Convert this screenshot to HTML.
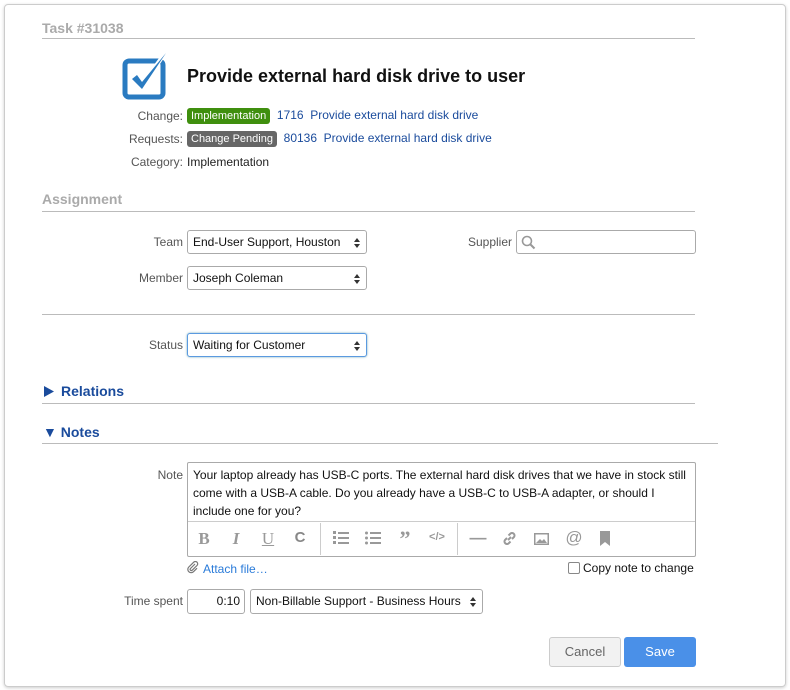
<!DOCTYPE html>
<html><head><style>
*{box-sizing:border-box;margin:0;padding:0}
body{width:790px;height:690px;background:#fff;font-family:"Liberation Sans",sans-serif;font-size:12px;color:#222;position:relative;overflow:hidden}
.frame{position:absolute;left:4px;top:4px;width:782px;height:683px;border:1px solid #ccc;border-radius:4px;box-shadow:0 1px 3px rgba(0,0,0,.2)}
.a{position:absolute;white-space:nowrap}
.hr{position:absolute;height:1px;background:#bbb}
.lbl{position:absolute;text-align:right;color:#555;white-space:nowrap}
.sel{position:absolute;border:1px solid #aaa;border-radius:3px;background:#fff;height:24px;line-height:22px;padding-left:5px;font-size:12px;color:#111}
.sel:after{content:"";position:absolute;right:6px;top:7px;border:3.5px solid transparent;border-bottom:4px solid #333;border-top:0}
.sel:before{content:"";position:absolute;right:6px;top:13px;border:3.5px solid transparent;border-top:4px solid #333;border-bottom:0}
.badge{display:inline-block;color:#fff;border-radius:3px;padding:1px 4px;font-size:11px;line-height:14px}
.lnk{color:#1a4b9c}
.h2{position:absolute;font-weight:bold;font-size:14px;color:#1a4b9c}
.tb{position:absolute;color:#999;font-size:17px;text-align:center;width:20px}
</style></head><body>
<div class="frame"></div>
<div class="a" style="left:42px;top:20px;font-weight:bold;font-size:14px;color:#aaa">Task #31038</div>
<div class="hr" style="left:42px;top:38px;width:653px"></div>
<svg class="a" style="left:122px;top:52px" width="46" height="48" viewBox="0 0 46 48"><rect x="3" y="9" width="38" height="36" rx="4" fill="none" stroke="#2a7bc1" stroke-width="5"/><path d="M8 27 L20 39 L46 0 L40 2 L20 29 L14 22 Z" fill="#fff"/><path d="M10 27 L20 37 L44 1 L20 30 L15 23 Z" fill="#2a7bc1"/></svg>
<div class="a" style="left:187px;top:66px;font-weight:bold;font-size:18px;color:#111">Provide external hard disk drive to user</div>
<div class="lbl" style="right:607px;top:109px">Change:</div>
<div class="a" style="left:187px;top:108px"><span class="badge" style="background:#3f8f0e">Implementation</span>&nbsp; <span class="lnk">1716&nbsp; Provide external hard disk drive</span></div>
<div class="lbl" style="right:607px;top:132px">Requests:</div>
<div class="a" style="left:187px;top:131px"><span class="badge" style="background:#666">Change Pending</span>&nbsp; <span class="lnk">80136&nbsp; Provide external hard disk drive</span></div>
<div class="lbl" style="right:607px;top:155px">Category:</div>
<div class="a" style="left:187px;top:155px">Implementation</div>
<div class="a" style="left:42px;top:191px;font-weight:bold;font-size:14px;color:#aaa">Assignment</div>
<div class="hr" style="left:42px;top:211px;width:653px"></div>
<div class="lbl" style="right:607px;top:235px">Team</div>
<div class="sel" style="left:187px;top:230px;width:180px">End-User Support, Houston</div>
<div class="lbl" style="right:278px;top:235px">Supplier</div>
<div class="a" style="left:516px;top:230px;width:180px;height:24px;border:1px solid #aaa;border-radius:3px"><svg style="position:absolute;left:4px;top:4px" width="15" height="15" viewBox="0 0 15 15"><circle cx="6" cy="6" r="4.5" fill="none" stroke="#999" stroke-width="1.6"/><path d="M9.5 9.5 L13.5 13.5" stroke="#999" stroke-width="2"/></svg></div>
<div class="lbl" style="right:607px;top:271px">Member</div>
<div class="sel" style="left:187px;top:266px;width:180px">Joseph Coleman</div>
<div class="hr" style="left:42px;top:314px;width:653px"></div>
<div class="lbl" style="right:607px;top:338px">Status</div>
<div class="sel" style="left:187px;top:333px;width:180px;border-color:#5b9ae0;box-shadow:0 0 2px #7ab">Waiting for Customer</div>
<svg class="a" style="left:44px;top:386px" width="10" height="11"><path d="M0 0 L10 5.5 L0 11Z" fill="#1a4b9c"/></svg>
<div class="h2" style="left:61px;top:383px">Relations</div>
<div class="hr" style="left:42px;top:403px;width:653px"></div>
<div class="h2" style="left:43px;top:424px">▼ Notes</div>
<div class="hr" style="left:42px;top:443px;width:676px"></div>
<div class="lbl" style="right:607px;top:468px">Note</div>
<div class="a" style="left:187px;top:462px;width:509px;height:95px;border:1px solid #aaa;border-radius:2px"></div>
<div class="a" style="left:193px;top:466px;width:500px;white-space:normal;line-height:18px;font-size:12px;color:#111">Your laptop already has USB-C ports. The external hard disk drives that we have in stock still come with a USB-A cable. Do you already have a USB-C to USB-A adapter, or should I include one for you?</div>
<div class="hr" style="left:188px;top:521px;width:507px;background:#ccc"></div>
<div class="a" style="left:320px;top:523px;width:1px;height:32px;background:#ccc"></div>
<div class="a" style="left:457px;top:523px;width:1px;height:32px;background:#ccc"></div>
<div class="tb" style="left:194px;top:529px;font-family:'Liberation Serif';font-weight:bold">B</div>
<div class="tb" style="left:226px;top:529px;font-family:'Liberation Serif';font-style:italic;font-weight:bold">I</div>
<div class="tb" style="left:258px;top:529px;font-family:'Liberation Serif';text-decoration:underline">U</div>
<div class="tb" style="left:290px;top:529px;font-weight:bold;font-size:15px;color:#888">C</div>
<svg class="a" style="left:333px;top:531px" width="16" height="14"><g fill="#999"><rect x="5" y="1" width="11" height="2"/><rect x="5" y="6" width="11" height="2"/><rect x="5" y="11" width="11" height="2"/><rect x="0" y="0" width="3" height="3"/><rect x="0" y="5" width="3" height="3"/><rect x="0" y="10" width="3" height="3"/></g></svg>
<svg class="a" style="left:365px;top:531px" width="16" height="14"><g fill="#999"><rect x="5" y="1" width="11" height="2"/><rect x="5" y="6" width="11" height="2"/><rect x="5" y="11" width="11" height="2"/><circle cx="1.5" cy="2" r="1.5"/><circle cx="1.5" cy="7" r="1.5"/><circle cx="1.5" cy="12" r="1.5"/></g></svg>
<div class="tb" style="left:395px;top:526px;font-weight:bold;font-size:22px;font-family:'Liberation Serif'">”</div>
<div class="tb" style="left:427px;top:531px;font-size:11px;font-weight:bold">&lt;/&gt;</div>
<div class="tb" style="left:468px;top:528px;font-weight:bold">—</div>
<svg class="a" style="left:502px;top:531px" width="15" height="15" viewBox="0 0 15 15"><g fill="none" stroke="#999" stroke-width="2"><path d="M6 9 L9 6"/><path d="M5 7 L3 9 a2.5 2.5 0 0 0 3.5 3.5 L8.5 10.5"/><path d="M10 8 L12 6 a2.5 2.5 0 0 0 -3.5 -3.5 L6.5 4.5"/></g></svg>
<svg class="a" style="left:534px;top:533px" width="15" height="12"><rect x="0.75" y="0.75" width="13.5" height="10.5" fill="none" stroke="#999" stroke-width="1.5"/><path d="M2 10 L6 6 L8 8 L10 6 L13 10Z" fill="#999"/></svg>
<div class="tb" style="left:564px;top:528px">@</div>
<svg class="a" style="left:600px;top:531px" width="10" height="15"><path d="M0 0H10V15L5 11L0 15Z" fill="#999"/></svg>
<svg class="a" style="left:187px;top:561px" width="12" height="13" viewBox="0 0 12 13"><path d="M8 3 L3.5 7.5 a1.2 1.2 0 0 0 1.7 1.7 L10 4.5 a2.3 2.3 0 0 0 -3.3 -3.3 L1.8 6 a3.3 3.3 0 0 0 4.7 4.7 L10 7.2" fill="none" stroke="#777" stroke-width="1.2"/></svg>
<div class="a" style="left:203px;top:562px;color:#2a7bd9">Attach file…</div>
<div class="a" style="left:568px;top:562px;width:12px;height:12px;border:1px solid #888;border-radius:2px"></div>
<div class="a" style="left:583px;top:561px;color:#111">Copy note to change</div>
<div class="lbl" style="right:607px;top:594px">Time spent</div>
<div class="a" style="left:187px;top:589px;width:58px;height:25px;border:1px solid #aaa;border-radius:3px;text-align:right;padding-right:4px;line-height:23px;color:#111">0:10</div>
<div class="sel" style="left:250px;top:589px;width:233px;height:25px">Non-Billable Support - Business Hours</div>
<div class="a" style="left:549px;top:637px;width:72px;height:30px;border:1px solid #ccc;border-radius:3px;background:#f2f2f2;text-align:center;line-height:28px;color:#666;font-size:13px">Cancel</div>
<div class="a" style="left:624px;top:637px;width:72px;height:30px;border-radius:3px;background:#4a90e8;text-align:center;line-height:30px;color:#fff;font-size:13px">Save</div>
</body></html>
